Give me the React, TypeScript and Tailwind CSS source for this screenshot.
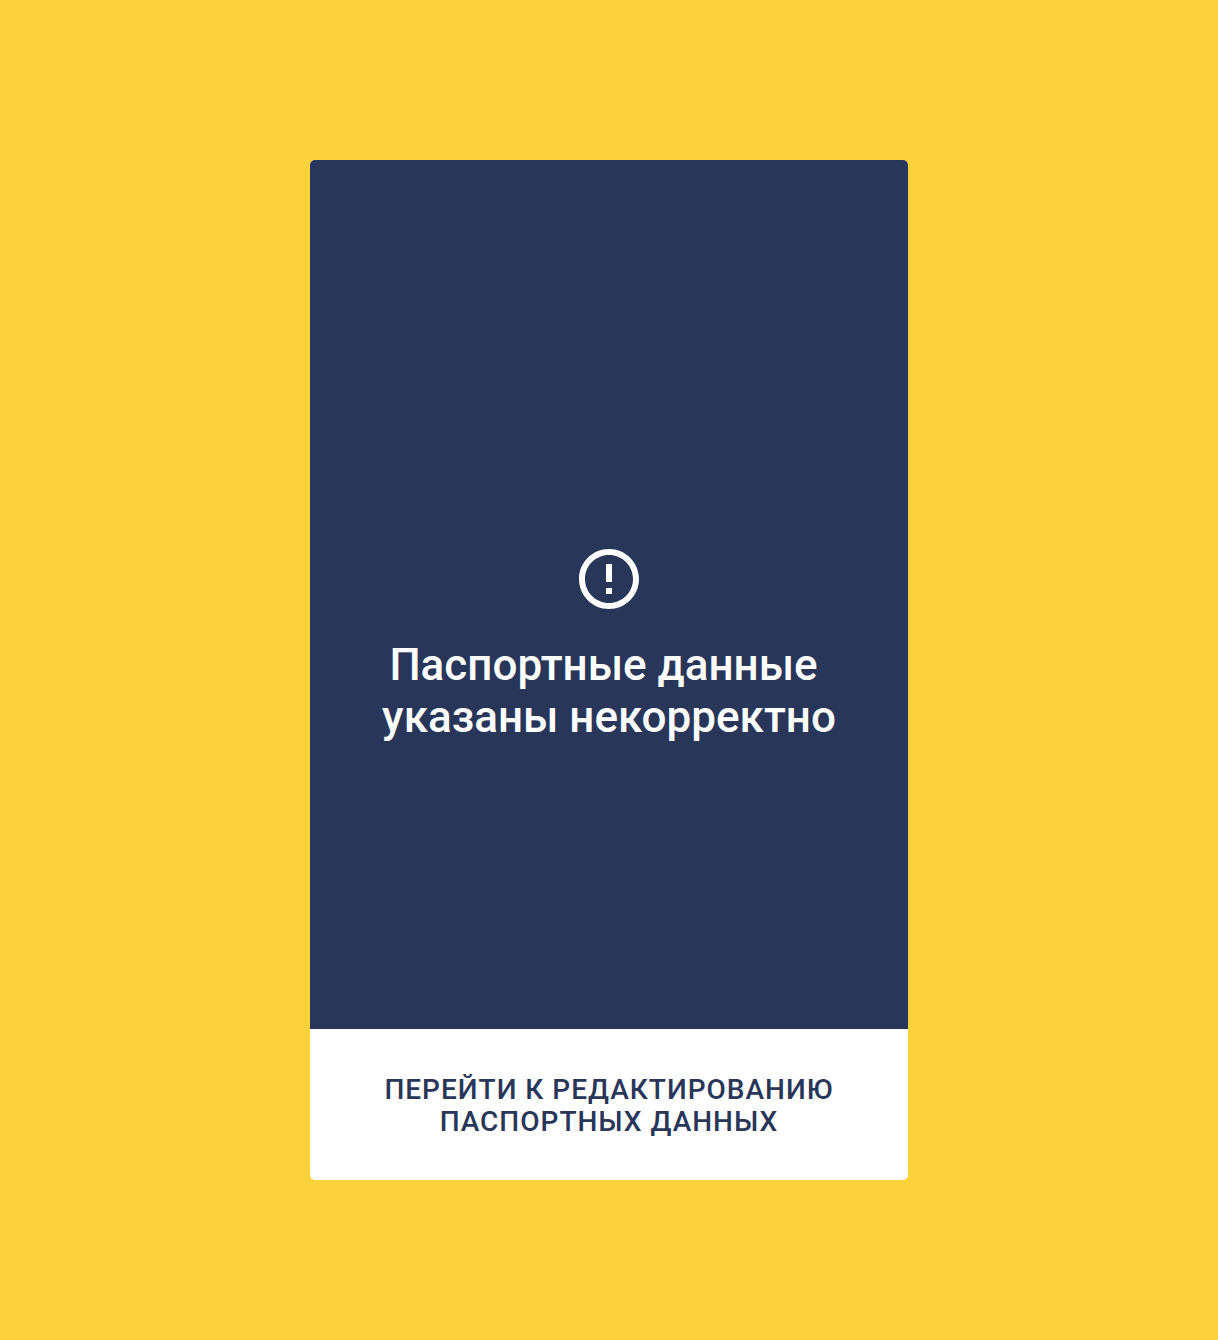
export default function App() {
  return (
    <main className="flex min-h-screen items-center justify-center bg-[#fbd13c] px-4 py-40 font-['Roboto',sans-serif]">
      <section className="w-full max-w-[598px] overflow-hidden rounded-[5px] bg-white">
        <div className="flex min-h-[869px] flex-col items-center justify-center bg-[#28365a] px-6 pt-[103px] text-center text-white">
          <svg viewBox="2 2 20 20" className="size-[60px]" fill="currentColor" aria-hidden="true">
            <path d="M11 15h2v2h-2v-2zm0-8h2v6h-2V7zm.99-5C6.47 2 2 6.48 2 12s4.47 10 9.99 10C17.52 22 22 17.52 22 12S17.52 2 11.99 2zM12 20c-4.42 0-8-3.58-8-8s3.58-8 8-8 8 3.58 8 8-3.58 8-8 8z" />
          </svg>
          <h1 className="mt-[30px] text-[44px] leading-[52px] font-medium whitespace-pre-wrap">
            {"Паспортные данные \nуказаны некорректно"}
          </h1>
        </div>
        <button type="button" className="flex min-h-[151px] w-full items-center justify-center px-6 pt-0.5 text-center text-[28px] leading-8 font-medium tracking-[1px] text-[#28365a] uppercase">
          <span>
            Перейти к редактированию
            <br />
            паспортных данных
          </span>
        </button>
      </section>
    </main>
  );
}
